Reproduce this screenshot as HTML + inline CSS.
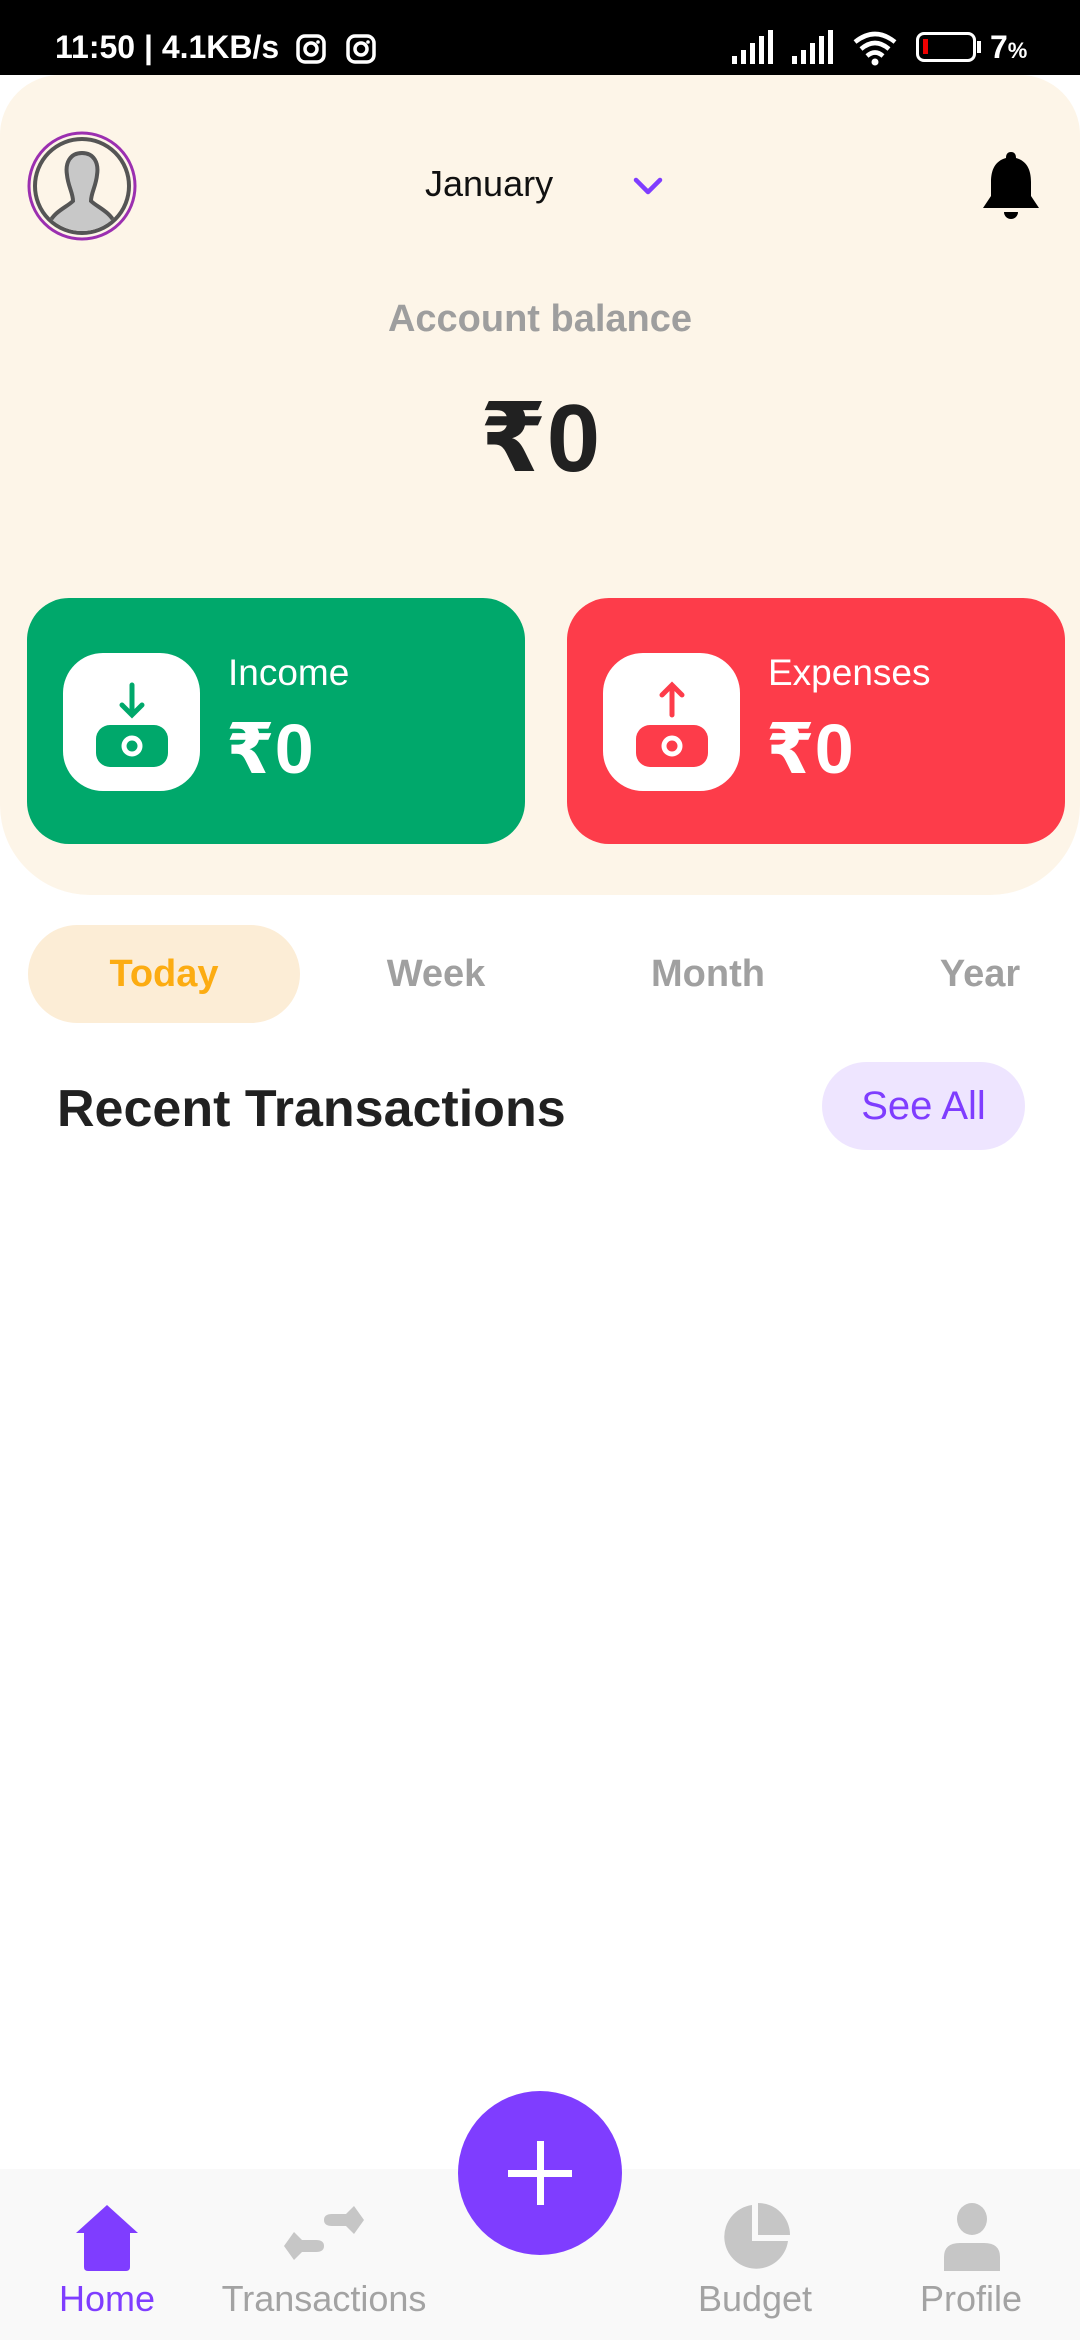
<!DOCTYPE html>
<html><head><meta charset="utf-8"><style>
*{margin:0;padding:0;box-sizing:border-box}
body{width:1080px;height:2340px;background:#fff;font-family:"Liberation Sans","DejaVu Sans",sans-serif;position:relative;overflow:hidden}
.abs{position:absolute}
.sb{left:0;top:0;width:1080px;height:75px;background:#000;color:#fff;font-size:32px;font-weight:bold}
.hdr{left:0;top:75px;width:1080px;height:820px;background:#fdf5e8;border-radius:60px 60px 90px 90px}
.card{top:598px;width:498px;height:246px;border-radius:42px}
.ib{left:36px;top:55px;width:137px;height:138px;background:#fff;border-radius:40px}
.ct{color:#fff;font-size:37px;left:201px;top:54px}
.cv{color:#fff;font-size:70px;font-weight:bold;left:199px;top:110px}
.tab{top:925px;height:98px;width:272px;line-height:98px;text-align:center;font-size:38px;font-weight:bold;color:#a0a0a0}
.nl{top:2278px;font-size:36px;color:#a3a3a3;text-align:center;width:240px}
</style></head><body>
<div class="abs sb">
 <span class="abs" style="left:55px;top:29px">11:50 | 4.1KB/s</span>
 <svg class="abs" style="left:296px;top:34px" width="30" height="30" viewBox="0 0 30 30"><rect x="2" y="2" width="26" height="26" rx="7" fill="none" stroke="#fff" stroke-width="3.5"/><circle cx="15" cy="15" r="6" fill="none" stroke="#fff" stroke-width="3.5"/><circle cx="22" cy="8" r="1.8" fill="#fff"/></svg>
 <svg class="abs" style="left:346px;top:34px" width="30" height="30" viewBox="0 0 30 30"><rect x="2" y="2" width="26" height="26" rx="7" fill="none" stroke="#fff" stroke-width="3.5"/><circle cx="15" cy="15" r="6" fill="none" stroke="#fff" stroke-width="3.5"/><circle cx="22" cy="8" r="1.8" fill="#fff"/></svg>
 <svg class="abs" style="left:732px;top:30px" width="50" height="34"><rect x="0" y="26" width="5" height="8" fill="#fff"/><rect x="9" y="20" width="5" height="14" fill="#fff"/><rect x="18" y="13" width="5" height="21" fill="#fff"/><rect x="27" y="6" width="5" height="28" fill="#fff"/><rect x="36" y="0" width="5" height="34" fill="#fff"/></svg>
 <svg class="abs" style="left:792px;top:30px" width="50" height="34"><rect x="0" y="26" width="5" height="8" fill="#fff"/><rect x="9" y="20" width="5" height="14" fill="#fff"/><rect x="18" y="13" width="5" height="21" fill="#fff"/><rect x="27" y="6" width="5" height="28" fill="#fff"/><rect x="36" y="0" width="5" height="34" fill="#fff"/></svg>
 <svg class="abs" style="left:852px;top:30px" width="46" height="36" viewBox="0 0 46 36"><path d="M3 12 Q23 -4 43 12" stroke="#fff" stroke-width="4.5" fill="none"/><path d="M9 19 Q23 7 37 19" stroke="#fff" stroke-width="4.5" fill="none"/><path d="M15 26 Q23 19 31 26" stroke="#fff" stroke-width="4.5" fill="none"/><circle cx="23" cy="32" r="3.5" fill="#fff"/></svg>
 <div class="abs" style="left:916px;top:32px;width:60px;height:30px;border:3.5px solid #fff;border-radius:8px"><div style="position:absolute;left:4px;top:4px;width:5px;height:15px;background:#e00"></div></div>
 <div class="abs" style="left:977px;top:41px;width:4px;height:12px;background:#fff"></div>
 <span class="abs" style="left:990px;top:29px">7<span style="font-size:22px">%</span></span>
</div>
<div class="abs hdr"></div>
<svg class="abs" style="left:27px;top:131px" width="110" height="110" viewBox="0 0 110 110">
 <circle cx="55" cy="55" r="53" fill="none" stroke="#9b2fb0" stroke-width="3"/>
 <circle cx="55" cy="55" r="47" fill="#fdf5e8" stroke="#555" stroke-width="4"/>
 <clipPath id="cc"><circle cx="55" cy="55" r="45"/></clipPath>
 <path clip-path="url(#cc)" d="M55 22 C43 22 38 32 40 44 C41 55 46 62 46 70 C40 76 28 80 22 92 L22 110 L88 110 L88 92 C82 80 70 76 64 70 C64 62 69 55 70 44 C72 32 67 22 55 22Z" fill="#c8c8c8" stroke="#555" stroke-width="4"/>
</svg>
<div class="abs" style="left:425px;top:163px;font-size:36px;color:#111">January</div>
<svg class="abs" style="left:632px;top:176px" width="32" height="20" viewBox="0 0 32 20"><path d="M4 4 L16 16 L28 4" stroke="#7f3dff" stroke-width="4.5" fill="none" stroke-linecap="round" stroke-linejoin="round"/></svg>
<svg class="abs" style="left:980px;top:150px" width="62" height="72" viewBox="0 0 62 72"><path d="M31 2 C27 2 26 5 26 8 C15 11 11 20 11 32 L11 46 L3 58 L59 58 L51 46 L51 32 C51 20 47 11 36 8 C36 5 35 2 31 2Z" fill="#000"/><path d="M24 62 A7 7 0 0 0 38 62Z" fill="#000"/></svg>
<div class="abs" style="left:0;width:1080px;top:298px;text-align:center;font-size:38px;font-weight:bold;color:#9e9e9e">Account balance</div>
<div class="abs" style="left:0;width:1080px;top:382px;text-align:center;font-size:96px;font-weight:bold;color:#212121">₹0</div>

<div class="abs card" style="left:27px;background:#00a86b">
 <div class="abs ib">
  <svg class="abs" style="left:30px;top:24px" width="78" height="92" viewBox="0 0 78 92"><path d="M39 8 V38 M29 28 L39 38 L49 28" stroke="#00a86b" stroke-width="5" fill="none" stroke-linecap="round"/><rect x="3" y="48" width="72" height="42" rx="14" fill="#00a86b"/><circle cx="39" cy="69" r="8" fill="none" stroke="#fff" stroke-width="5"/></svg>
 </div>
 <div class="abs ct">Income</div><div class="abs cv">₹0</div>
</div>
<div class="abs card" style="left:567px;background:#fd3c4a">
 <div class="abs ib">
  <svg class="abs" style="left:30px;top:24px" width="78" height="92" viewBox="0 0 78 92"><path d="M39 38 V8 M29 18 L39 8 L49 18" stroke="#fd3c4a" stroke-width="5" fill="none" stroke-linecap="round"/><rect x="3" y="48" width="72" height="42" rx="14" fill="#fd3c4a"/><circle cx="39" cy="69" r="8" fill="none" stroke="#fff" stroke-width="5"/></svg>
 </div>
 <div class="abs ct">Expenses</div><div class="abs cv">₹0</div>
</div>

<div class="abs tab" style="left:28px;background:#fcedd6;border-radius:49px;color:#fcac12">Today</div>
<div class="abs tab" style="left:300px">Week</div>
<div class="abs tab" style="left:572px">Month</div>
<div class="abs tab" style="left:844px">Year</div>

<div class="abs" style="left:57px;top:1079px;font-size:52px;font-weight:bold;color:#212121">Recent Transactions</div>
<div class="abs" style="left:822px;top:1062px;width:203px;height:88px;border-radius:44px;background:#eee5ff;color:#7f3dff;font-size:40px;text-align:center;line-height:88px">See All</div>

<div class="abs" style="left:0;top:2169px;width:1080px;height:171px;background:#f9f9f9"></div>
<div class="abs" style="left:458px;top:2091px;width:164px;height:164px;border-radius:50%;background:#7f3dff"></div>
<svg class="abs" style="left:506px;top:2139px" width="68" height="68"><rect x="31" y="2" width="7" height="64" fill="#fff"/><rect x="2" y="31" width="64" height="7" fill="#fff"/></svg>

<svg class="abs" style="left:74px;top:2203px" width="66" height="68" viewBox="0 0 66 68"><path d="M33 2 L64 30 L56 30 L56 64 Q56 68 52 68 L14 68 Q10 68 10 64 L10 30 L2 30Z" fill="#7f3dff" stroke-linejoin="round"/></svg>
<svg class="abs" style="left:284px;top:2206px" width="80" height="66" viewBox="0 0 80 66"><path d="M48 8 L62 8 L70 0 L80 14 L70 28 L62 20 L48 20 Q40 20 40 14 Q40 8 48 8Z" fill="#c6c6c6"/><path d="M32 46 L18 46 L10 54 L0 40 L10 26 L18 34 L32 34 Q40 34 40 40 Q40 46 32 46Z" fill="#c6c6c6"/></svg>
<svg class="abs" style="left:722px;top:2203px" width="68" height="68" viewBox="0 0 68 68"><path d="M30 2 A32 32 0 1 0 66 38 L30 38Z" fill="#c6c6c6"/><path d="M36 0 A32 32 0 0 1 68 32 L36 32Z" fill="#c6c6c6"/></svg>
<svg class="abs" style="left:944px;top:2203px" width="56" height="68" viewBox="0 0 56 68"><ellipse cx="28" cy="16" rx="15" ry="16" fill="#c6c6c6"/><path d="M0 68 L0 54 Q0 40 16 40 L40 40 Q56 40 56 54 L56 68Z" fill="#c6c6c6"/></svg>

<div class="abs nl" style="left:-13px;color:#7f3dff">Home</div>
<div class="abs nl" style="left:204px">Transactions</div>
<div class="abs nl" style="left:635px">Budget</div>
<div class="abs nl" style="left:851px">Profile</div>
</body></html>
